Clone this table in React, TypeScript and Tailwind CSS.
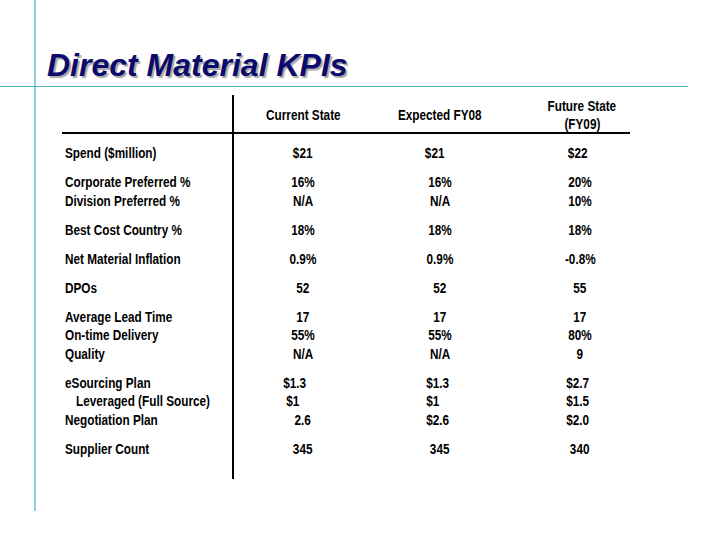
type Cell = { v: string; cls?: string };
type Row = { label: string; indent?: boolean; gap?: boolean; cells: Cell[] };

const rows: Row[] = [
  { label: "Spend ($million)", cells: [{ v: "$21" }, { v: "$21", cls: "pr-[10px]" }, { v: "$22", cls: "pr-[4px]" }] },
  { label: "Corporate Preferred %", gap: true, cells: [{ v: "16%" }, { v: "16%" }, { v: "20%" }] },
  { label: "Division Preferred %", cells: [{ v: "N/A" }, { v: "N/A" }, { v: "10%" }] },
  { label: "Best Cost Country %", gap: true, cells: [{ v: "18%" }, { v: "18%" }, { v: "18%" }] },
  { label: "Net Material Inflation", gap: true, cells: [{ v: "0.9%" }, { v: "0.9%" }, { v: "-0.8%" }] },
  { label: "DPOs", gap: true, cells: [{ v: "52" }, { v: "52" }, { v: "55" }] },
  { label: "Average Lead Time", gap: true, cells: [{ v: "17" }, { v: "17" }, { v: "17" }] },
  { label: "On-time Delivery", cells: [{ v: "55%" }, { v: "55%" }, { v: "80%" }] },
  { label: "Quality", cells: [{ v: "N/A" }, { v: "N/A" }, { v: "9" }] },
  { label: "eSourcing Plan", gap: true, cells: [{ v: "$1.3", cls: "pr-[16px]" }, { v: "$1.3", cls: "pr-[4px]" }, { v: "$2.7", cls: "pr-[4px]" }] },
  { label: "Leveraged (Full Source)", indent: true, cells: [{ v: "$1", cls: "pr-[20px]" }, { v: "$1", cls: "pr-[14px]" }, { v: "$1.5", cls: "pr-[4px]" }] },
  { label: "Negotiation Plan", cells: [{ v: "2.6" }, { v: "$2.6", cls: "pr-[4px]" }, { v: "$2.0", cls: "pr-[4px]" }] },
  { label: "Supplier Count", gap: true, cells: [{ v: "345" }, { v: "345" }, { v: "340", cls: "pr-[1px]" }] },
];

const colCls = ["w-[138px]", "w-[136px]", "w-[122px] pl-[22px]"];

function Narrow({ children, left }: { children: React.ReactNode; left?: boolean }) {
  return (
    <span className={`inline-block whitespace-nowrap scale-x-[0.84] ${left ? "origin-left" : "origin-center"}`}>
      {children}
    </span>
  );
}

export default function App() {
  return (
    <div
      className="w-[720px] h-[540px] bg-white overflow-hidden text-black"
      style={{ fontFamily: "'Liberation Sans', Arial, sans-serif" }}
    >
      {/* title band */}
      <div className="w-[688px] h-[87px] border-b-[1.5px] border-[#4fb3c3]">
        <div className="ml-[34px] h-full border-l-2 border-[#8fd4d4] pl-[11px] pt-[45px]">
          <h1
            className="text-[32px] leading-[40px] font-bold italic text-[#0b0b6e]"
            style={{ textShadow: "2px 2px 1px #a8a8a8" }}
          >
            Direct Material KPIs
          </h1>
        </div>
      </div>

      {/* body */}
      <div className="ml-[34px] h-[424px] border-l-2 border-[#8fd4d4] pt-[8px] pl-[26px]">
        <div className="w-[568px] text-[14px] font-bold">
          {/* header */}
          <div className="flex h-[39px] border-b-2 border-black">
            <div className="w-[172px] border-r-2 border-black" />
            <div className={`${colCls[0]} text-center pt-[12px] leading-[17px]`}>
              <Narrow>Current State</Narrow>
            </div>
            <div className={`${colCls[1]} text-center pt-[12px] leading-[17px]`}>
              <Narrow>Expected FY08</Narrow>
            </div>
            <div className={`${colCls[2]} text-center pt-[2px] leading-[18px] pl-[26px]`}>
              <div>
                <Narrow>Future State</Narrow>
              </div>
              <div>
                <Narrow>(FY09)</Narrow>
              </div>
            </div>
          </div>

          {/* rows */}
          <div className="flex flex-col">
            {rows.map((r, i) => {
              const pad = i === 0 ? "pt-[10px]" : r.gap ? "pt-[10.5px]" : "";
              return (
                <div key={r.label} className="flex leading-[18.5px]">
                  <div className={`w-[172px] border-r-2 border-black ${pad} ${r.indent ? "pl-[14px]" : "pl-[3px]"}`}>
                    <Narrow left>{r.label}</Narrow>
                  </div>
                  {r.cells.map((c, j) => (
                    <div key={j} className={`${colCls[j]} ${pad} text-center`}>
                      <div className={c.cls ?? ""}>
                        <Narrow>{c.v}</Narrow>
                      </div>
                    </div>
                  ))}
                </div>
              );
            })}
            <div className="flex h-[21px]">
              <div className="w-[172px] border-r-2 border-black" />
            </div>
          </div>
        </div>
      </div>
    </div>
  );
}
